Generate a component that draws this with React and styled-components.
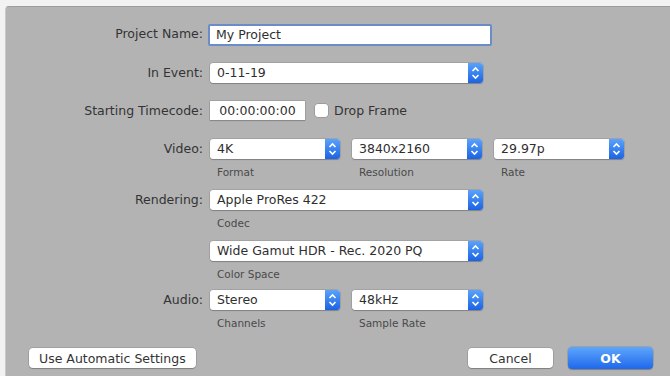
import React from "react";
import styled, { createGlobalStyle } from "styled-components";

const GlobalStyle = createGlobalStyle`
	html, body {
		margin: 0;
		padding: 0;
		background: #f2f2f2;
	}
	body {
		width: 670px;
		height: 376px;
		overflow: hidden;
		font-family: "DejaVu Sans", "Liberation Sans", sans-serif;
		color: #333;
	}
`;

const Stepper = () => (
	<StepBox>
		<svg width="9" height="14" viewBox="0 0 9 14">
			<path d="M1.5 5 L4.5 2 L7.5 5" stroke="#fff" strokeWidth="1.6" fill="none" />
			<path d="M1.5 9 L4.5 12 L7.5 9" stroke="#fff" strokeWidth="1.6" fill="none" />
		</svg>
	</StepBox>
);

const Popup = ({ value, width, caption }) => (
	<Field>
		<Select width={width}>
			<Value>{value}</Value>
			<Stepper />
		</Select>
		{caption && <Caption>{caption}</Caption>}
	</Field>
);

export default function App() {
	return (
		<>
			<GlobalStyle />
			<Dialog>
				<Row height={39}>
					<Label>Project Name:</Label>
					<TextInput>My Project</TextInput>
				</Row>
				<Row height={38}>
					<Label>In Event:</Label>
					<Popup value="0-11-19" width={273} />
				</Row>
				<Row height={38}>
					<Label>Starting Timecode:</Label>
					<Controls>
						<Timecode>00:00:00:00</Timecode>
						<Check>
							<Box />
							<span>Drop Frame</span>
						</Check>
					</Controls>
				</Row>
				<Row height={51}>
					<Label>Video:</Label>
					<Controls>
						<Popup value="4K" width={130} caption="Format" />
						<Popup value="3840x2160" width={130} caption="Resolution" />
						<Popup value="29.97p" width={130} caption="Rate" />
					</Controls>
				</Row>
				<Row height={51}>
					<Label>Rendering:</Label>
					<Popup value="Apple ProRes 422" width={273} caption="Codec" />
				</Row>
				<Row height={49}>
					<Label />
					<Popup value="Wide Gamut HDR - Rec. 2020 PQ" width={273} caption="Color Space" />
				</Row>
				<Row height={57}>
					<Label>Audio:</Label>
					<Controls>
						<Popup value="Stereo" width={130} caption="Channels" />
						<Popup value="48kHz" width={131} caption="Sample Rate" />
					</Controls>
				</Row>
				<Footer>
					<Button>Use Automatic Settings</Button>
					<Actions>
						<Button>Cancel</Button>
						<Primary>OK</Primary>
					</Actions>
				</Footer>
			</Dialog>
		</>
	);
}

const Dialog = styled.div`
	margin: 6px 0 0 5px;
	width: 670px;
	height: 380px;
	box-sizing: border-box;
	padding-top: 17px;
	background: #b3b3b3;
	border-top: 1px solid #9c9c9c;
	border-left: 1px solid #c9c9c9;
	border-top-left-radius: 4px;
`;

const Row = styled.div`
	display: grid;
	grid-template-columns: 197px auto;
	column-gap: 7px;
	align-items: start;
	height: ${(p) => p.height}px;
`;

const Label = styled.div`
	text-align: right;
	font-size: 12.5px;
	line-height: 20px;
	color: #333;
`;

const Controls = styled.div`
	display: flex;
	align-items: flex-start;
	gap: 12px;
`;

const Field = styled.div`
	display: flex;
	flex-direction: column;
`;

const Select = styled.div`
	display: flex;
	width: ${(p) => p.width}px;
	height: 20px;
	background: #fff;
	border-radius: 3px;
	box-shadow: 0 0 0 0.5px rgba(0, 0, 0, 0.18), 0 1px 1px rgba(0, 0, 0, 0.2);
	overflow: hidden;
`;

const Value = styled.div`
	flex: 1;
	padding-left: 7px;
	font-size: 12.5px;
	line-height: 20px;
	color: #2f2f2f;
	white-space: nowrap;
`;

const StepBox = styled.div`
	width: 15px;
	display: flex;
	align-items: center;
	justify-content: center;
	background: linear-gradient(#5aa2fb, #1b63e4);
`;

const Caption = styled.div`
	margin-top: 6px;
	padding-left: 7px;
	font-size: 10.5px;
	line-height: 14px;
	color: #4a4a4a;
`;

const TextInput = styled.div`
	margin-left: -2px;
	width: 274px;
	height: 18px;
	padding-left: 6px;
	box-sizing: content-box;
	background: #fff;
	border: 2px solid #6b8cc7;
	border-radius: 2px;
	font-size: 12.5px;
	line-height: 18px;
	color: #2f2f2f;
`;

const Timecode = styled.div`
	width: 95px;
	height: 19px;
	box-sizing: border-box;
	background: #fff;
	box-shadow: 0 0 0 0.5px rgba(0, 0, 0, 0.2), 0 1px 1px rgba(0, 0, 0, 0.15);
	text-align: center;
	font-size: 12.5px;
	line-height: 19px;
	color: #2f2f2f;
`;

const Check = styled.label`
	display: flex;
	align-items: center;
	gap: 6px;
	height: 19px;
	margin-left: -2px;
	font-size: 12.5px;
	color: #333;
`;

const Box = styled.span`
	width: 13px;
	height: 13px;
	background: #fff;
	border-radius: 3px;
	box-shadow: 0 0 0 0.5px rgba(0, 0, 0, 0.25);
`;

const Footer = styled.div`
	display: flex;
	justify-content: space-between;
	align-items: center;
	height: 22px;
	padding: 0 22px 0 23px;
`;

const Actions = styled.div`
	display: flex;
	align-items: center;
	gap: 15px;
`;

const Button = styled.button`
	height: 20px;
	min-width: 85px;
	padding: 0 10px;
	border: none;
	border-radius: 4px;
	background: #fff;
	box-shadow: 0 0 0 0.5px rgba(0, 0, 0, 0.2), 0 1px 1px rgba(0, 0, 0, 0.2);
	font-family: "DejaVu Sans", "Liberation Sans", sans-serif;
	font-size: 12.5px;
	color: #333;
`;

const Primary = styled(Button)`
	height: 22px;
	background: linear-gradient(#5ea6fb, #1f68ec);
	color: #fff;
	font-weight: bold;
`;
